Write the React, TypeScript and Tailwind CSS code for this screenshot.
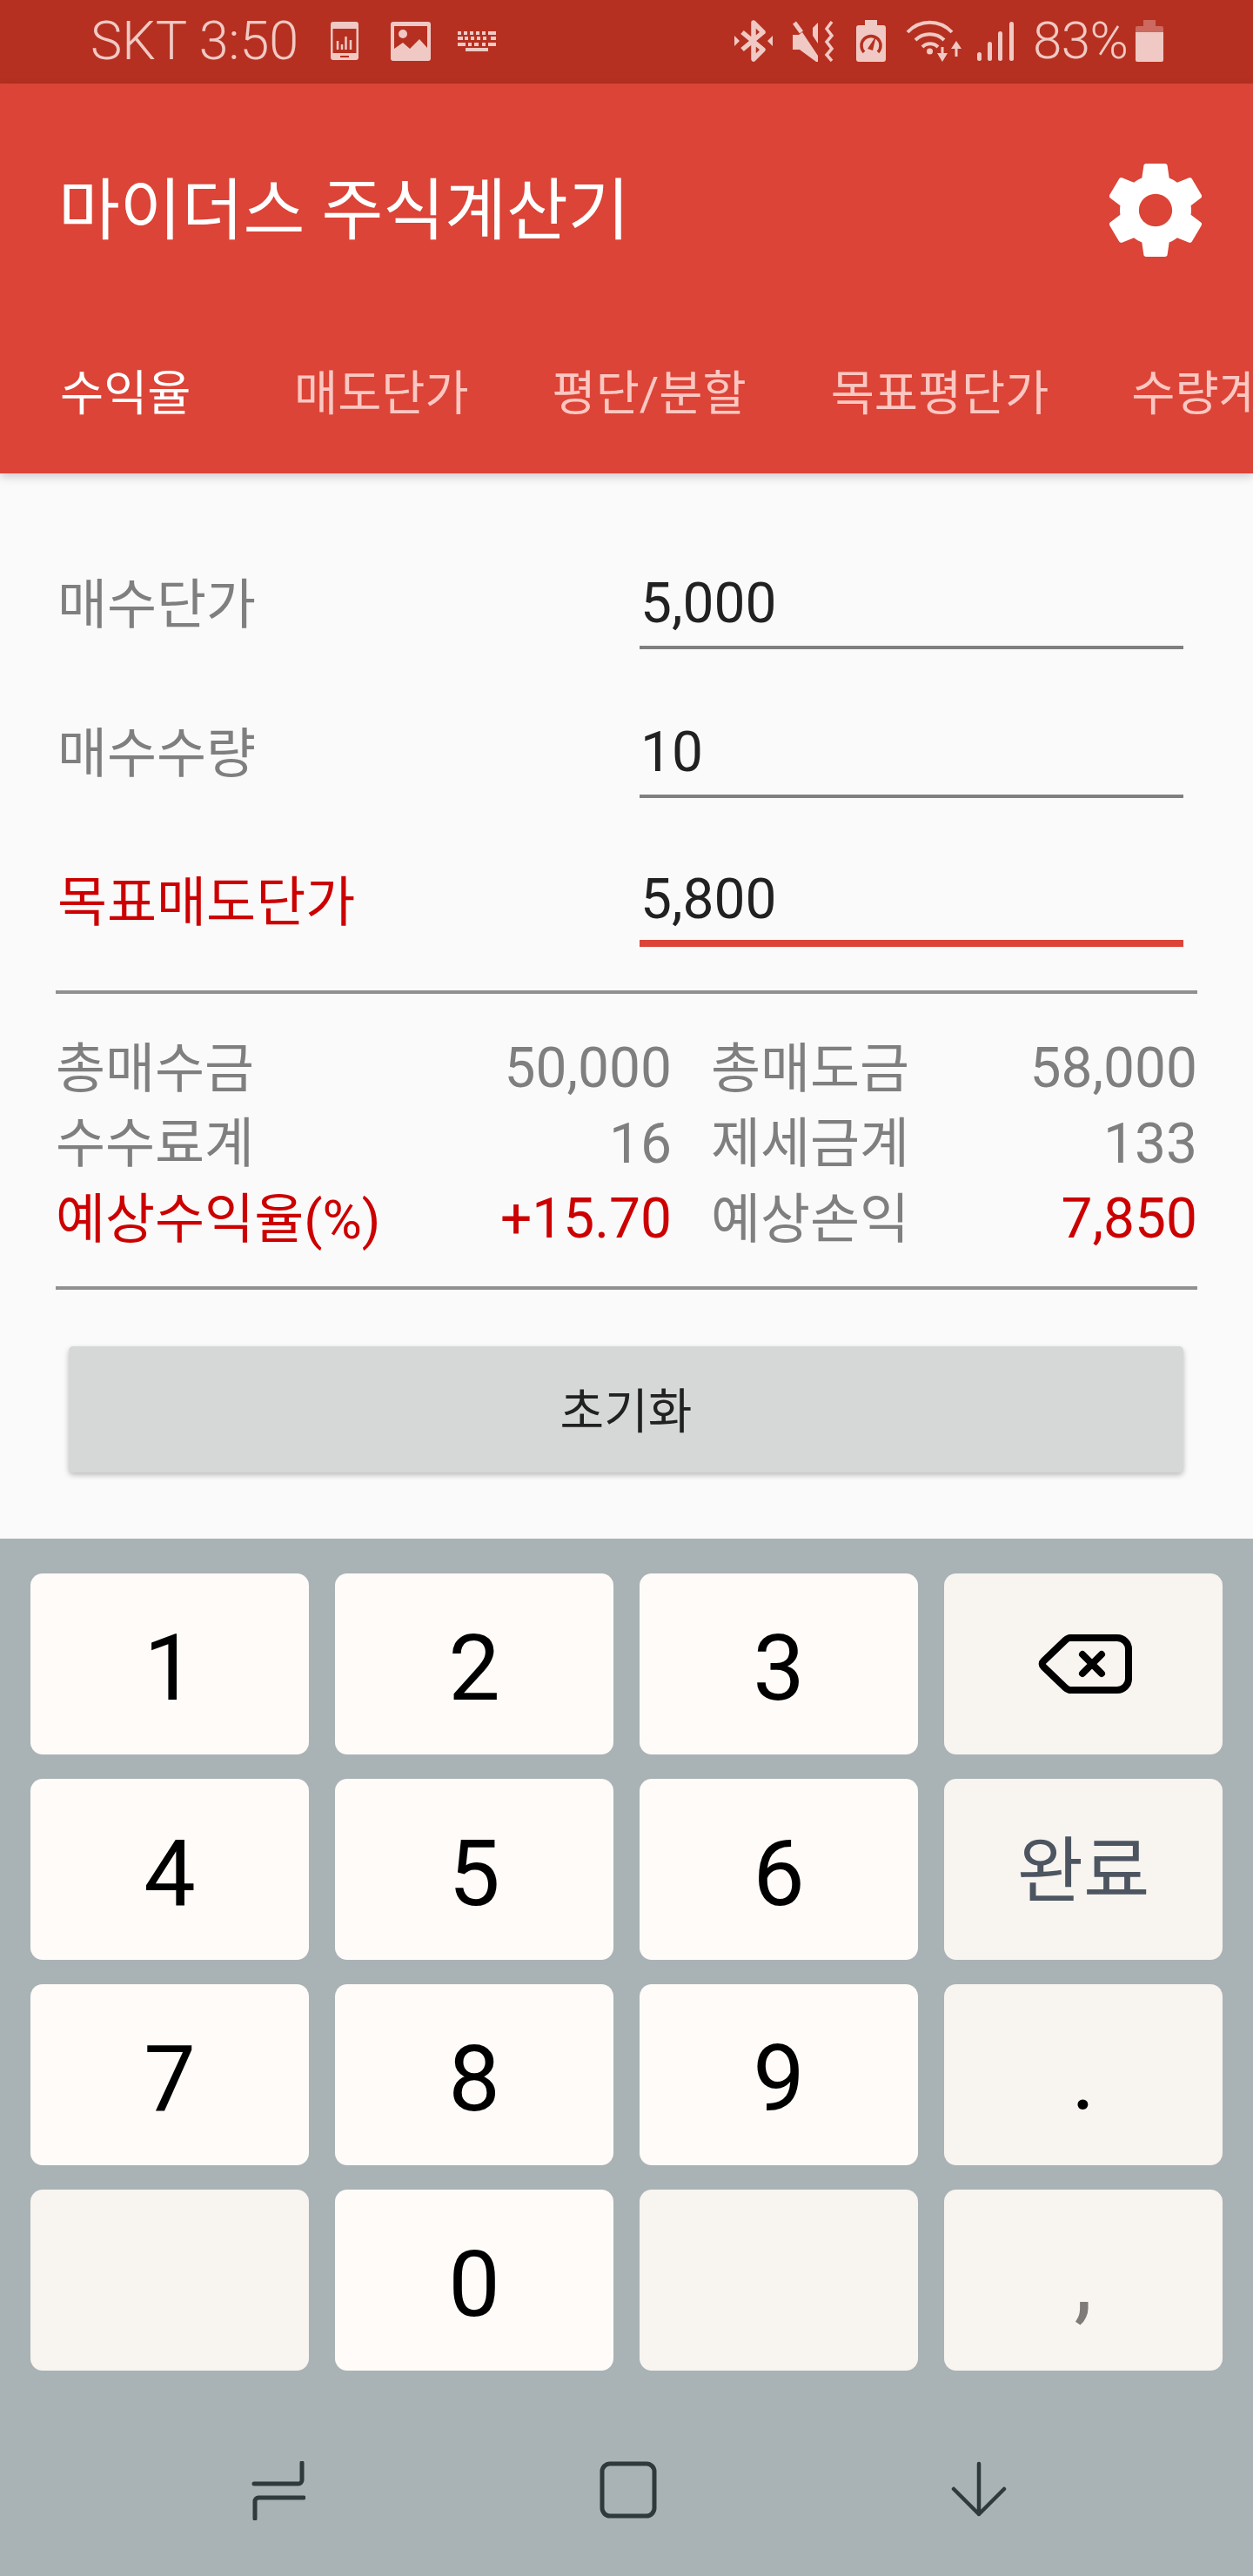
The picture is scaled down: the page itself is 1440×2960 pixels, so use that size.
const fontStack = "font-['Roboto','Noto_Sans_CJK_KR',sans-serif]";

const Phone = () => (
  <svg width="32" height="44" viewBox="0 0 32 44" className="ml-[36px]">
    <rect width="32" height="44" rx="3" fill="#f0c9c4" />
    <rect x="2.500" y="8" width="27" height="28" fill="#b53020" />
    <path d="M8 22v10M13 26v6M17.500 17v15M23 21v11" stroke="#f0c9c4" strokeWidth="2.500" />
    <rect x="11" y="39" width="10" height="2" fill="#b53020" />
  </svg>
);

const ImageIcon = () => (
  <svg width="46" height="45" viewBox="0 0 46 45" className="ml-[37px]">
    <rect width="46" height="45" rx="3" fill="#f0c9c4" />
    <rect x="4" y="5" width="38" height="35" fill="#b53020" />
    <circle cx="14" cy="14" r="5" fill="#f0c9c4" />
    <path d="M4 31l10-7 8 7 11-11 9 10v11H4z" fill="#f0c9c4" />
  </svg>
);

const Keyboard = () => (
  <svg width="44" height="23" viewBox="0 0 44 23" className="ml-[31px]" fill="#f0c9c4">
    <path d="M0 0h4v4H0zM7 0h4v4H7zM14 0h4v4h-4zM21 0h4v4h-4zM28 0h4v4h-4zM35 0h9v4h-9z" />
    <path d="M0 6h6v4H0zM8 6h4v4H8zM15 6h4v4h-4zM22 6h4v4h-4zM29 6h4v4h-4zM38 6h6v4h-6z" />
    <path d="M0 13h9v4H0zM12 13h4v4h-4zM19 13h5v4h-5zM28 13h4v4h-4zM35 13h9v4h-9z" />
    <rect x="9" y="19" width="26" height="4" />
  </svg>
);

const Bluetooth = () => (
  <svg width="44" height="50" viewBox="0 0 44 50">
    <path d="M9 15l24 20-11 11V4l11 11L9 35" fill="none" stroke="#f0c9c4" strokeWidth="5.500" strokeLinejoin="round" />
    <path d="M0 19l6 6-6 6zM44 19l-6 6 6 6z" fill="#f0c9c4" />
  </svg>
);

const MuteVibrate = () => (
  <svg width="49" height="47" viewBox="0 0 49 47" className="ml-[23px]">
    <path d="M0 16h7l4-3 18 27v7h-2L12 36l-4-3H0zM29 2v24l-6-9v-9z" fill="#f0c9c4" />
    <path d="M2 2l8 11" stroke="#f0c9c4" strokeWidth="5" />
    <path d="M45 1l-6 8 6 8-6 7 6 8-6 7 6 7" fill="none" stroke="#f0c9c4" strokeWidth="3.500" />
  </svg>
);

const BatterySaver = () => (
  <svg width="34" height="48" viewBox="0 0 34 48" className="ml-[24px]">
    <path d="M10 0h14v6h7a3 3 0 0 1 3 3v36a3 3 0 0 1-3 3H3a3 3 0 0 1-3-3V9a3 3 0 0 1 3-3h7z" fill="#f0c9c4" />
    <path d="M9 37a11 11 0 1 1 16 0" fill="none" stroke="#b53020" strokeWidth="3.500" />
    <path d="M13 33l10-15-4 17z" fill="#b53020" />
  </svg>
);

const Wifi = () => (
  <svg width="65" height="48" viewBox="0 0 65 48" className="ml-[23px]" fill="none" stroke="#f0c9c4">
    <path d="M2 14C16 -1 39 -1 53 14" strokeWidth="4" />
    <path d="M11 23c9-9 24-9 33 0" strokeWidth="4" />
    <path d="M19 31c5-5 13-5 18 0" strokeWidth="4" />
    <circle cx="27.500" cy="36" r="3.500" fill="#f0c9c4" stroke="none" />
    <path d="M42 31v12M58 29v13" strokeWidth="3" />
    <path d="M36 38h12l-6 10zM52 33h12l-6-9z" fill="#f0c9c4" stroke="none" />
  </svg>
);

const Signal = () => (
  <svg width="42" height="45" viewBox="0 0 42 45" className="ml-[17px]" fill="#f0c9c4">
    <rect x="0" y="35" width="5" height="10" rx="2.500" />
    <rect x="12" y="23" width="5" height="22" rx="2.500" />
    <rect x="24" y="11" width="5" height="34" rx="2.500" />
    <rect x="37" y="0" width="5" height="45" rx="2.500" />
  </svg>
);

const Battery = () => (
  <svg width="32" height="48" viewBox="0 0 32 48" className="ml-[10px]">
    <path d="M9 0h14v7h7a2 2 0 0 1 2 2v5H0V9a2 2 0 0 1 2-2h7z" fill="#cc6a60" />
    <path d="M0 14h32v32a2 2 0 0 1-2 2H2a2 2 0 0 1-2-2z" fill="#f0c9c4" />
  </svg>
);

const Gear = () => (
  <svg width="106" height="107" viewBox="2.300 2 19.400 20" preserveAspectRatio="none" fill="#fff">
    <path d="M19.430 12.980c.04-.32.07-.64.07-.98s-.03-.66-.07-.98l2.110-1.650c.19-.15.24-.42.12-.64l-2-3.460c-.12-.22-.39-.3-.61-.22l-2.490 1c-.52-.4-1.080-.73-1.690-.98l-.38-2.650C14.460 2.180 14.250 2 14 2h-4c-.25 0-.46.18-.49.42l-.38 2.650c-.61.25-1.170.59-1.690.98l-2.490-1c-.23-.09-.49 0-.61.22l-2 3.460c-.13.22-.07.49.12.64l2.110 1.650c-.04.32-.07.65-.07.98s.03.66.07.98l-2.110 1.650c-.19.15-.24.42-.12.64l2 3.460c.12.22.39.3.61.22l2.490-1c.52.4 1.080.73 1.690.98l.38 2.650c.03.24.24.42.49.42h4c.25 0 .46-.18.49-.42l.38-2.650c.61-.25 1.170-.59 1.690-.98l2.490 1c.23.09.49 0 .61-.22l2-3.460c.12-.22.07-.49-.12-.64l-2.110-1.650zM12 15.500c-1.930 0-3.500-1.570-3.500-3.500s1.570-3.500 3.500-3.500 3.500 1.570 3.500 3.500-1.570 3.500-3.500 3.500z" />
  </svg>
);

const Backspace = () => (
  <svg width="108" height="72" viewBox="0 0 108 72" className="ml-[3px]" fill="none" stroke="#000" strokeWidth="8" strokeLinecap="round" strokeLinejoin="round">
    <path d="M6 33L31 9a14 14 0 0 1 5-3h55a13 13 0 0 1 13 13v34a13 13 0 0 1-13 13H36a14 14 0 0 1-5-3L6 39a4 4 0 0 1 0-6z" />
    <path d="M51 25l22 22M73 25L51 47" />
  </svg>
);

function Field({ label, value, active }: { label: string; value: string; active?: boolean }) {
  return (
    <div className="flex h-[106px] items-stretch">
      <div className={`flex w-[671px] items-center pt-[4px] pl-[2px] text-[62px] ${active ? 'text-[#cc0000]' : 'text-[#7f7f7f]'}`}>
        {label}
      </div>
      <div className={`flex w-[625px] items-center pt-[5px] pl-[1px] text-[64px] text-[#212121] ${active ? 'border-b-[8px] border-[#dc4437]' : 'border-b-[4px] border-[#7f7f7f]'}`}>
        {value}
      </div>
    </div>
  );
}

function SummaryCell({ label, value, labelRed, valueRed }: { label: string; value: string; labelRed?: boolean; valueRed?: boolean }) {
  return (
    <div className="flex h-[86.500px] items-center justify-between">
      <span className={labelRed ? 'text-[#cc0000]' : 'text-[#7f7f7f]'}>{label}</span>
      <span className={`text-[64px] ${valueRed ? 'text-[#cc0000]' : 'text-[#7f7f7f]'}`}>{value}</span>
    </div>
  );
}

function Key({ children, fn }: { children?: React.ReactNode; fn?: boolean }) {
  return (
    <div className={`flex h-[208px] items-center justify-center rounded-[14px] text-[106px] text-black ${fn ? 'bg-[#f8f4f0]' : 'bg-[#fefbf8] pt-[10px]'}`}>
      {children}
    </div>
  );
}

export default function App() {
  return (
    <div className={`flex h-[2960px] w-[1440px] flex-col overflow-hidden bg-[#fafafa] ${fontStack}`}>
      {/* Status bar */}
      <div className="flex h-[96px] items-center bg-[#b53020] pb-[2px] pl-[104px] text-[#f0c9c4]">
        <span className="w-[240px] text-[61px] leading-none font-light whitespace-nowrap">SKT 3:50</span>
        <Phone />
        <ImageIcon />
        <Keyboard />
        <div className="ml-[274px]"><Bluetooth /></div>
        <MuteVibrate />
        <BatterySaver />
        <Wifi />
        <Signal />
        <span className="ml-[22px] w-[108px] text-[60px] leading-none font-light tracking-[-0.500px] whitespace-nowrap">83%</span>
        <Battery />
      </div>

      {/* App bar + tabs */}
      <div className="relative z-10 h-[448px] bg-[#db4437] shadow-[0_4px_10px_rgba(0,0,0,0.18)]">
        <div className="flex h-[290px] items-center justify-between pr-[59px] pl-[67px] text-[77px] text-white">
          <span className="pt-[5px]">마이더스 주식계산기</span>
          <Gear />
        </div>
        <div className="flex overflow-hidden pt-[26px] pl-[69px] text-[54.500px] whitespace-nowrap text-[#fbc7c2]">
          <span className="w-[147px] text-white">수익율</span>
          <span className="ml-[122px]">매도단가</span>
          <span className="ml-[96px]">평단/분할</span>
          <span className="ml-[97px]">목표평단가</span>
          <span className="ml-[95px]">수량계산</span>
        </div>
      </div>

      {/* Form */}
      <div className="flex flex-1 flex-col px-[64px] pt-[96px]">
        <div className="flex flex-col gap-[65px]">
          <Field label="매수단가" value="5,000" />
          <Field label="매수수량" value="10" />
          <Field label="목표매도단가" value="5,800" active />
        </div>
        <div className="mt-[50px] h-[4px] w-[1312px] bg-[#909090]" />
        <div className="grid w-[1312px] grid-cols-[708px_559px] gap-x-[45px] pt-[43px] text-[62px]">
          <SummaryCell label="총매수금" value="50,000" />
          <SummaryCell label="총매도금" value="58,000" />
          <SummaryCell label="수수료계" value="16" />
          <SummaryCell label="제세금계" value="133" />
          <SummaryCell label="예상수익율(%)" value="+15.70" labelRed valueRed />
          <SummaryCell label="예상손익" value="7,850" valueRed />
        </div>
        <div className="mt-[33px] h-[4px] w-[1312px] bg-[#909090]" />
        <button className="mt-[65px] ml-[15px] flex h-[145px] w-[1281px] items-center justify-center rounded-[5px] bg-[#d6d7d7] pt-[6px] text-[55px] text-[#212121] shadow-[0_3px_6px_rgba(0,0,0,0.25)]">
          초기화
        </button>
      </div>

      {/* Keyboard */}
      <div className="flex h-[1192px] flex-col bg-[#a9b3b5]">
        <div className="grid grid-cols-4 gap-x-[30px] gap-y-[28px] px-[35px] pt-[40px]">
          <Key>1</Key>
          <Key>2</Key>
          <Key>3</Key>
          <Key fn><Backspace /></Key>
          <Key>4</Key>
          <Key>5</Key>
          <Key>6</Key>
          <Key fn><span className="pt-[6px] text-[83px] text-[#4c5560]">완료</span></Key>
          <Key>7</Key>
          <Key>8</Key>
          <Key>9</Key>
          <Key fn><span className="pt-[6px]">.</span></Key>
          <Key fn />
          <Key>0</Key>
          <Key fn />
          <Key fn><span className="text-[#7f7b78]">,</span></Key>
        </div>
        {/* Navigation bar */}
        <div className="flex flex-1 items-start pt-[104px] pl-[289px]">
          <svg width="62" height="68" viewBox="0 0 62 68" fill="none" stroke="#2f3a3c" strokeWidth="5" strokeLinecap="round" strokeLinejoin="round">
            <path d="M58 2v20a4 4 0 0 1-4 4H3" />
            <path d="M60 42H8a4 4 0 0 0-4 4v20" />
          </svg>
          <svg width="66" height="66" viewBox="0 0 66 66" className="ml-[338px]" fill="none" stroke="#2f3a3c" strokeWidth="5">
            <rect x="3" y="3" width="60" height="60" rx="9" />
          </svg>
          <svg width="64" height="64" viewBox="0 0 64 64" className="ml-[338px]" fill="none" stroke="#2f3a3c" strokeWidth="4.500" strokeLinecap="round" strokeLinejoin="round">
            <path d="M32 3v58M3 32l29 29 29-29" />
          </svg>
        </div>
      </div>
    </div>
  );
}
